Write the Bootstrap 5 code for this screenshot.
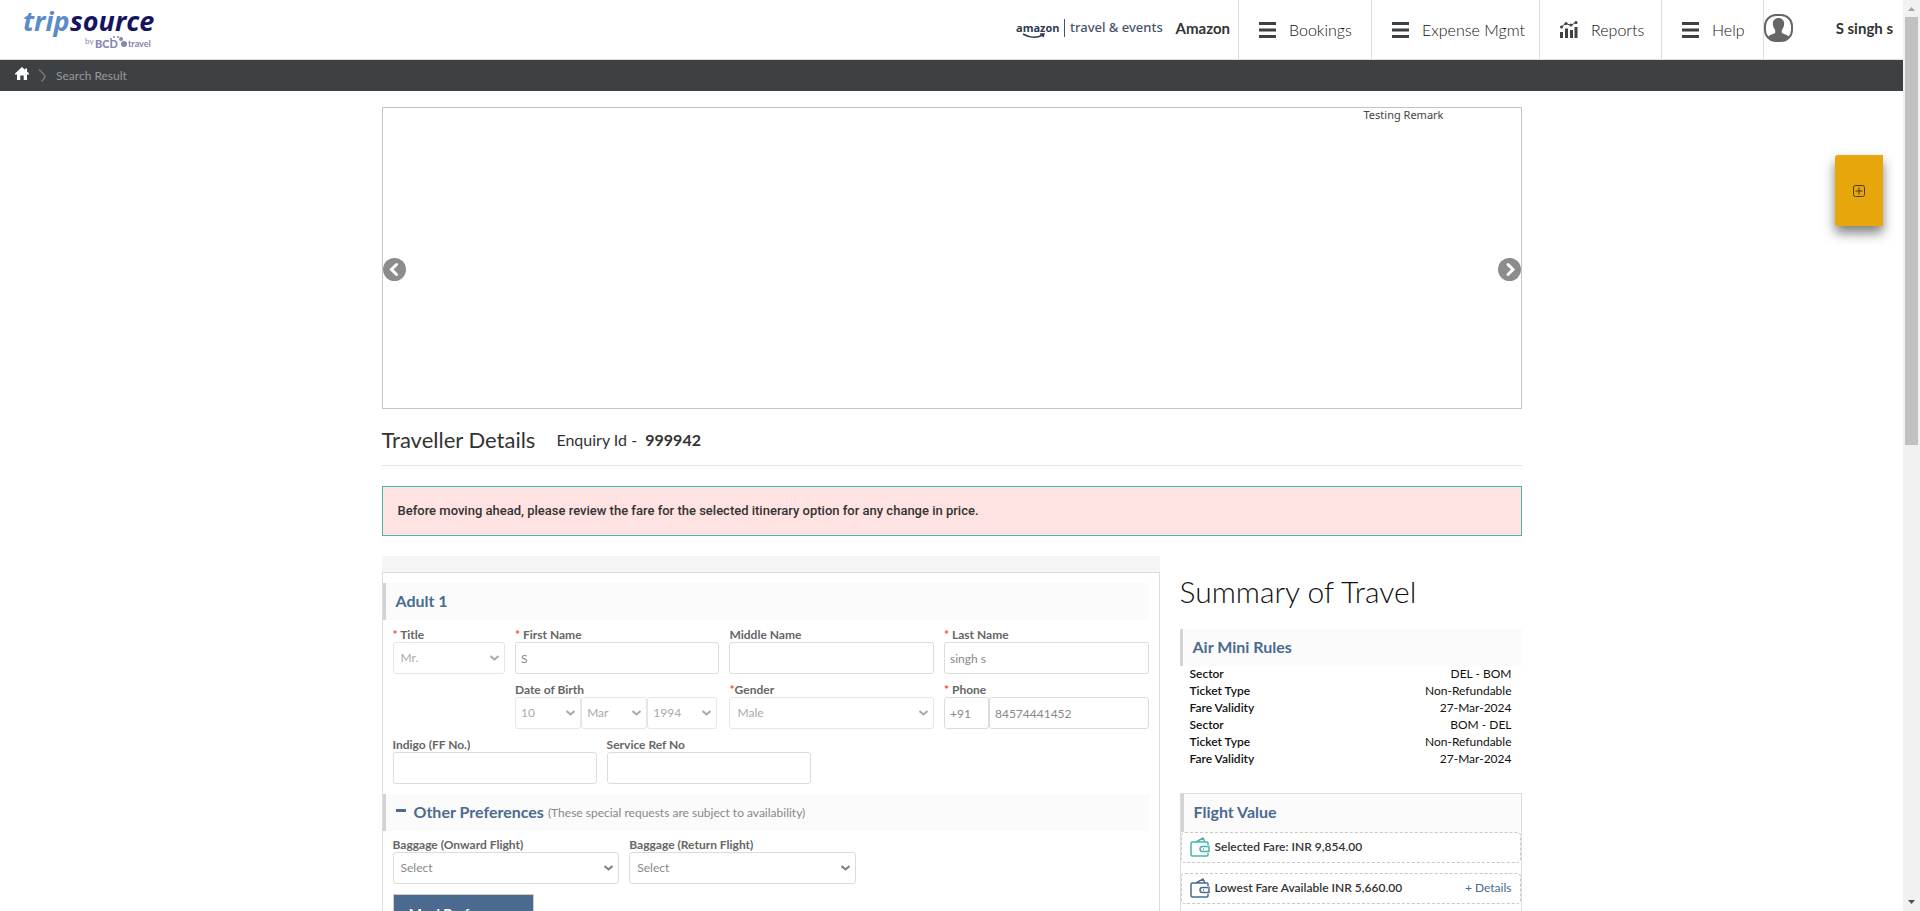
<!DOCTYPE html>
<html lang="en">
<head>
<meta charset="utf-8">
<meta name="viewport" content="width=device-width, initial-scale=1">
<title>Traveller Details</title>
<link href="https://cdn.jsdelivr.net/npm/bootstrap@5.3.0/dist/css/bootstrap.min.css" rel="stylesheet">
<style>
  :root { --ink:#333; --brand:#4a6b8f; --line:#dcdcdc; --bar:#3d4144; }
  body { font-family:Lato,"Liberation Sans",sans-serif; font-size:12px; line-height:16px; color:var(--ink); background:#fff; }
  .page-shell { height:100vh; }
  .page-pane { min-width:0; overflow:hidden; }
  a { color:inherit; text-decoration:none; }
  svg { flex:none; overflow:visible; }

  .top-bar { height:60px; border-bottom:1px solid #e0e0e0; }
  .brand-logo { margin-left:22px; margin-top:6px; }
  .menu-link { font-size:16px; font-weight:300; gap:13px; padding-left:20px; border-left:1px solid var(--line); color:#111; white-space:nowrap; }
  .menu-link.w-a { width:133px; } .menu-link.w-b { width:168px; } .menu-link.w-c { width:122px; } .menu-link.w-d { width:102px; }
  .avatar-box { width:140px; padding-right:10px; border-left:1px solid var(--line); white-space:nowrap; }
  .who { font-size:15px; font-weight:700; }
  .crumb-bar { height:31px; background:var(--bar); color:#999; padding-left:15px; gap:10px; }

  .content-wrap { max-width:1140px; margin:16px auto 0; }
  .banner { height:302px; border:1px solid #c4c4c4; }
  .banner-note { font-family:"Noto Sans",sans-serif; font-size:11px; line-height:14px; color:#444; padding-right:77px; }
  .banner .btn { width:23px; height:23px; top:150px; }
  .page-title { font-size:22px; line-height:28px; }
  .enquiry { font-size:16px; line-height:28px; }
  .heading-row { height:57px; border-bottom:1px solid #e4e4e4; padding-top:17px; gap:21px; }
  .fare-alert { margin-top:20px; height:50px; padding:0 14px 0 15px; border:1px solid #4db6ac; background:#ffe2e2; font-family:Roboto,sans-serif; font-size:13px; font-weight:500; }

  .split { margin-top:20px; gap:20px; }
  .form-col { flex:778 1 0; } .side-col { flex:342 1 0; }
  .strip { height:16px; background:#f5f5f5; }
  .form-panel { border:1px solid var(--line); padding:10px 10px 40px 0; }
  .block-head { min-height:37px; border-left:3px solid #d3d3d3; background:#fbfbfb; color:var(--brand); font-size:16px; line-height:20px; font-weight:700; padding:0 10px 2px; margin:0; }
  .block-note { font-size:12px; font-weight:400; color:#888; padding-top:2px; }
  .fields { padding-left:10px; column-gap:10px; }
  .four-up { display:grid; grid-template-columns:11fr 20fr 20fr 20fr; }
  .w-27 { width:27%; } .w-30 { width:30%; }
  .code-box { width:22%; }
  .field-label { display:block; height:16px; line-height:17px; font-weight:700; color:#666; white-space:nowrap; }
  .req { color:#f44; }
  .fields .form-control, .fields .form-select { height:32px; border:1px solid var(--line); border-radius:3px; font-size:12px; color:#888; padding:0 5px; background-color:#fff; }
  .fields .form-select { padding:0 22px 0 7px; background-size:9px 6px; background-position:right 5px center;
    background-image:url("data:image/svg+xml,%3Csvg xmlns='http://www.w3.org/2000/svg' viewBox='0 0 9 6'%3E%3Cpath d='M.5 1l4 3.500L8.500 1' fill='none' stroke='%23808080' stroke-width='2'/%3E%3C/svg%3E"); }
  .fields .form-select:disabled { color:#aaa; opacity:1; border-color:#e6e6e6;
    background-image:url("data:image/svg+xml,%3Csvg xmlns='http://www.w3.org/2000/svg' viewBox='0 0 9 6'%3E%3Cpath d='M.5 1l4 3.500L8.500 1' fill='none' stroke='%23aaa' stroke-width='2'/%3E%3C/svg%3E"); }
  .dob .form-select { padding-left:5px; width:33%; } .dob .form-select:last-child { width:35%; }
  .gap-a { margin-top:6px; } .gap-b { margin-top:7px; } .gap-c { margin-top:10px; } .gap-d { margin-top:5px; }
  .dob { margin-right:2px; }
  .meal-btn { margin:10px 0 0 10px; width:141px; height:38px; border:1px solid #ccc; border-radius:0; background:var(--brand); color:#fff; font-size:14px; font-weight:700; padding:0; }

  .side-title { font-size:30px; line-height:34px; margin:18px 0 21px; color:#111; }
  .rules { width:calc(100% - 20px); margin:0 10px; color:#111; }
  .rules th { font-weight:600; } .rules th, .rules td { padding:0; line-height:16px; height:17px; vertical-align:top; }
  .value-panel { margin-top:25px; border:1px solid var(--line); height:200px; }
  .value-panel .block-head { min-height:38px; }
  .fare-row { height:31px; border:1px dashed #c8c8c8; border-radius:4px; padding:0 8px 2px; gap:5px; font-weight:600; }
  .detail-link { color:var(--brand); font-weight:400; }
  .side-tab { right:20px; top:155px; width:48px; height:71px; background:#e8a60d; border-radius:3px 0 0 3px; box-shadow:0 7px 12px rgba(0,0,0,.5); border:0; }

  .scroll-rail { width:17px; background:#f1f1f1; flex:none; }
  .scroll-thumb { width:13px; height:47%; background:#c1c1c1; }
</style>
</head>
<body>
<div class="page-shell d-flex overflow-hidden">
  <div class="page-pane flex-grow-1 position-relative">
    <header class="top-bar d-flex">
      <a href="#" class="brand-logo" aria-label="tripsource by BCD travel">
        <svg width="136" height="46" viewBox="0 0 136 46">
          <g font-family="Open Sans,sans-serif" font-weight="700" font-style="italic" font-size="27">
            <text x="1" y="25" fill="#5b8bc9">trip</text><text x="48" y="25" fill="#14145f">source</text>
          </g>
          <g fill="#8685b5" font-family="Lato,sans-serif">
            <text x="63" y="38" font-size="8">by</text><text x="73" y="42" font-size="11" font-weight="900">BCD</text><text x="106" y="41" font-size="9" font-weight="700">travel</text>
            <circle cx="89" cy="33" r="1"/><circle cx="92" cy="31" r="1"/><circle cx="96" cy="31" r="1"/><circle cx="99" cy="33" r="2"/><circle cx="102" cy="38" r="3"/>
          </g>
        </svg>
      </a>
      <div class="ms-auto d-flex align-items-center pe-2 pb-1">
        <svg class="me-2" width="148" height="26" viewBox="0 0 148 26" role="img" aria-label="amazon travel &amp; events">
          <g fill="#2c3a4f" font-family="Open Sans,sans-serif">
            <text x="0" y="17" font-size="11" font-weight="700">amazon</text>
            <text x="54" y="17" font-family="Noto Sans,sans-serif" font-size="13" font-weight="500" fill="#46536a">travel &amp; events</text>
          </g>
          <path d="M48.500 4v18" stroke="#46536a"/>
          <path d="M7 19q10 6 20 1M24 19l4 0-1 3" fill="none" stroke="#2c3a4f" stroke-width="1.500"/>
        </svg>
        <span class="who ps-1">Amazon</span>
      </div>
      <nav class="d-flex align-items-stretch" aria-label="Main">
        <a href="#" class="menu-link w-a d-flex align-items-center"><svg width="17" height="16" viewBox="0 0 17 16"><path d="M0 1.500h17M0 8h17M0 14.500h17" stroke="#3d4144" stroke-width="3"/></svg>Bookings</a>
        <a href="#" class="menu-link w-b d-flex align-items-center"><svg width="17" height="16" viewBox="0 0 17 16"><path d="M0 1.500h17M0 8h17M0 14.500h17" stroke="#3d4144" stroke-width="3"/></svg>Expense Mgmt</a>
        <a href="#" class="menu-link w-c d-flex align-items-center"><svg width="18" height="17" viewBox="0 0 18 17"><path d="M1.500 17v-6M6.500 17V7.500M11.500 17V9M16 17V6" stroke="#3d4144" stroke-width="3"/><path d="M1 6l5-3.500 5 2L16 1" fill="none" stroke="#3d4144"/><g fill="#3d4144"><circle cx="1.500" cy="6" r="1.500"/><circle cx="6" cy="2.500" r="1.500"/><circle cx="11" cy="4" r="1.500"/><circle cx="16" cy="1.500" r="1.500"/></g></svg>Reports</a>
        <a href="#" class="menu-link w-d d-flex align-items-center"><svg width="17" height="16" viewBox="0 0 17 16"><path d="M0 1.500h17M0 8h17M0 14.500h17" stroke="#3d4144" stroke-width="3"/></svg>Help</a>
        <a href="#" class="avatar-box d-flex align-items-center pb-1">
          <svg width="29" height="28" viewBox="0 0 29 28"><rect x="1" y="1" width="27" height="26" rx="11" fill="#fff" stroke="#666" stroke-width="2"/><path d="M14.500 4c4 0 6 3 5.600 6.500-.3 3-1.500 4-2.300 5.500v3c3 1.300 6 2 7.200 4-2 3-5 4-10.500 4S6 26 4 23c1.200-2 4.200-2.700 7.200-4v-3c-.8-1.500-2-2.500-2.300-5.500C8.500 7 10.500 4 14.500 4z" fill="#666"/></svg>
          <span class="who ms-auto">S singh s</span>
        </a>
      </nav>
    </header>

    <nav class="crumb-bar d-flex align-items-center" aria-label="Breadcrumb">
      <a href="#" aria-label="Home" class="d-flex pb-1"><svg width="14" height="13" viewBox="0 0 14 13"><path d="M7 0l3 2.700V1.500h2v3L14 6.500V7.500h-2V13H8.700V8.500H5.300V13H2V7.500H0V6.500z" fill="#fff"/></svg></a>
      <svg width="7" height="13" viewBox="0 0 7 13"><path d="M0 .5L4.500 5Q7 7 5 9.500L2.500 12.500" fill="none" stroke="#777" stroke-width="1.500"/></svg>
      <span>Search Result</span>
    </nav>

    <main class="content-wrap">
      <section class="banner position-relative">
        <div class="banner-note text-end">Testing Remark</div>
        <button class="btn p-0 border-0 d-flex position-absolute start-0" aria-label="Previous"><svg width="23" height="23" viewBox="0 0 23 23"><circle cx="11.500" cy="11.500" r="11.500" fill="#8c8c8c"/><path d="M13.500 6.500l-5 5 5 5" fill="none" stroke="#fff" stroke-width="3" stroke-linecap="round"/></svg></button>
        <button class="btn p-0 border-0 d-flex position-absolute end-0" aria-label="Next"><svg width="23" height="23" viewBox="0 0 23 23"><circle cx="11.500" cy="11.500" r="11.500" fill="#8c8c8c"/><path d="M10 6.500l5 5-5 5" fill="none" stroke="#fff" stroke-width="3" stroke-linecap="round"/></svg></button>
      </section>

      <div class="heading-row d-flex">
        <h1 class="page-title m-0 fw-normal">Traveller Details</h1>
        <div class="enquiry">Enquiry Id - &nbsp;<strong>999942</strong></div>
      </div>

      <div class="fare-alert d-flex align-items-center">Before moving ahead, please review the fare for the selected itinerary option for any change in price.</div>

      <div class="split d-flex">
        <form class="form-col">
          <div class="strip"></div>
          <div class="form-panel">
            <h2 class="block-head d-flex align-items-center">Adult 1</h2>
            <div class="fields four-up gap-a">
              <div><label class="field-label" for="title"><span class="req">*</span> Title</label><select id="title" class="form-select" disabled><option>Mr.</option></select></div>
              <div><label class="field-label" for="first"><span class="req">*</span> First Name</label><input id="first" class="form-control" value="S"></div>
              <div><label class="field-label" for="middle">Middle Name</label><input id="middle" class="form-control"></div>
              <div><label class="field-label" for="last"><span class="req">*</span> Last Name</label><input id="last" class="form-control" value="singh s"></div>
            </div>
            <div class="fields four-up gap-b">
              <div></div>
              <div><label class="field-label" for="day">Date of Birth</label>
                <div class="dob d-flex">
                  <select id="day" class="form-select" disabled><option>10</option></select>
                  <select class="form-select" aria-label="Month" disabled><option>Mar</option></select>
                  <select class="form-select" aria-label="Year" disabled><option>1994</option></select>
                </div></div>
              <div><label class="field-label" for="gender"><span class="req">*</span>Gender</label><select id="gender" class="form-select" disabled><option>Male</option></select></div>
              <div><label class="field-label" for="phone"><span class="req">*</span> Phone</label>
                <div class="d-flex"><input class="form-control code-box" aria-label="Country code" value="+91"><input id="phone" class="form-control flex-grow-1 w-50" value="84574441452"></div></div>
            </div>
            <div class="fields d-flex gap-b">
              <div class="w-27"><label class="field-label" for="ff">Indigo (FF No.)</label><input id="ff" class="form-control"></div>
              <div class="w-27"><label class="field-label" for="ref">Service Ref No</label><input id="ref" class="form-control"></div>
            </div>
            <h2 class="block-head d-flex align-items-center gap-c"><svg class="me-2" width="10" height="3" viewBox="0 0 10 3"><path d="M0 .5h10" stroke="#4a6b8f" stroke-width="3"/></svg>Other Preferences<span class="block-note ms-1">(These special requests are subject to availability)</span></h2>
            <div class="fields d-flex gap-d">
              <div class="w-30"><label class="field-label" for="bag1">Baggage (Onward Flight)</label><select id="bag1" class="form-select"><option>Select</option></select></div>
              <div class="w-30"><label class="field-label" for="bag2">Baggage (Return Flight)</label><select id="bag2" class="form-select"><option>Select</option></select></div>
            </div>
            <button type="button" class="btn meal-btn">Meal Preferences</button>
          </div>
        </form>

        <aside class="side-col">
          <h2 class="side-title fw-light">Summary of Travel</h2>
          <h3 class="block-head d-flex align-items-center">Air Mini Rules</h3>
          <table class="rules">
            <tbody>
              <tr><th scope="row">Sector</th><td class="text-end">DEL - BOM</td></tr>
              <tr><th scope="row">Ticket Type</th><td class="text-end">Non-Refundable</td></tr>
              <tr><th scope="row">Fare Validity</th><td class="text-end">27-Mar-2024</td></tr>
              <tr><th scope="row">Sector</th><td class="text-end">BOM - DEL</td></tr>
              <tr><th scope="row">Ticket Type</th><td class="text-end">Non-Refundable</td></tr>
              <tr><th scope="row">Fare Validity</th><td class="text-end">27-Mar-2024</td></tr>
            </tbody>
          </table>
          <section class="value-panel">
            <h3 class="block-head d-flex align-items-center">Flight Value</h3>
            <div class="fare-row d-flex align-items-center"><svg width="20" height="20" viewBox="0 0 20 20" fill="none" stroke="#45b5a8" stroke-width="1.500"><path d="M18 8V6q0-1-1-1H2.500Q1 5 1 6.500v11Q1 19 2.500 19H17q1 0 1-1.500V16M18 9.500h-5.500a2.500 2.500 0 0 0 0 5H19v-6M6 5l7-4 2 4M13 12h1"/></svg>Selected Fare: INR 9,854.00</div>
            <div class="fare-row d-flex align-items-center gap-c"><svg width="20" height="20" viewBox="0 0 20 20" fill="none" stroke="#4a6b8f" stroke-width="1.500"><path d="M18 8V6q0-1-1-1H2.500Q1 5 1 6.500v11Q1 19 2.500 19H17q1 0 1-1.500V16M18 9.500h-5.500a2.500 2.500 0 0 0 0 5H19v-6M6 5l7-4 2 4M13 12h1"/></svg>Lowest Fare Available INR 5,660.00<a href="#" class="ms-auto detail-link">+ Details</a></div>
          </section>
        </aside>
      </div>
    </main>

    <button class="side-tab position-absolute d-flex align-items-center justify-content-center" aria-label="Expand"><svg width="12" height="12" viewBox="0 0 12 12" fill="none" stroke="#4d3b10"><rect x=".5" y=".5" width="11" height="11" rx="2"/><path d="M6 2.500v7M2.500 6h7"/></svg></button>
  </div>

  <div class="scroll-rail d-flex flex-column align-items-center" aria-hidden="true">
    <svg width="17" height="17" viewBox="0 0 17 17"><path d="M5 11h7L8.500 7z" fill="#a3a3a3"/></svg>
    <div class="scroll-thumb"></div>
    <svg width="17" height="17" viewBox="0 0 17 17" class="mt-auto"><path d="M5 6h7L8.500 10z" fill="#505050"/></svg>
  </div>
</div>
<script src="https://cdn.jsdelivr.net/npm/bootstrap@5.3.0/dist/js/bootstrap.bundle.min.js"></script>
</body>
</html>
